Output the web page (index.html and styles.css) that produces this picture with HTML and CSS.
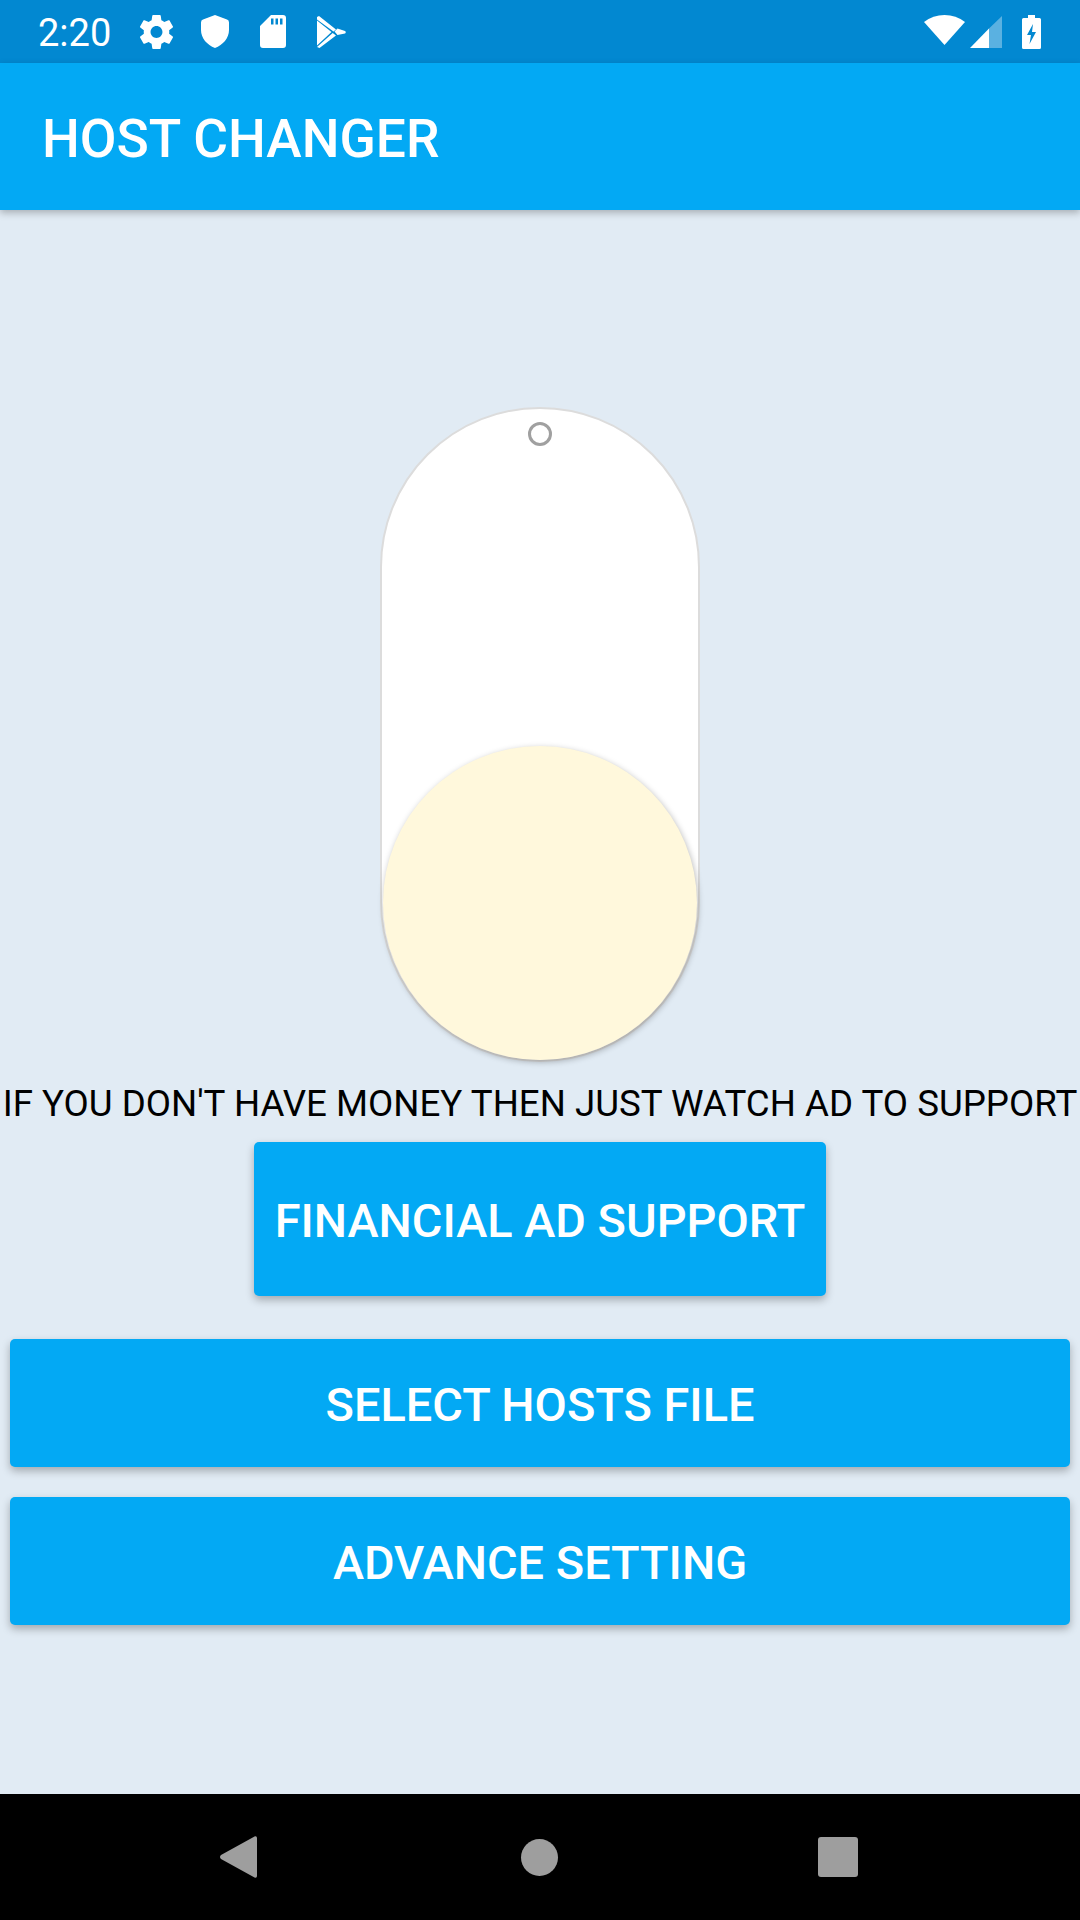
FILE: index.html
```html
<!DOCTYPE html>
<html lang="en">
<head>
  <meta charset="UTF-8">
  <meta name="viewport" content="width=device-width, initial-scale=1.0">
  <title>Host Changer</title>
  <link rel="stylesheet" href="styles.css">
</head>
<body>
  <div class="status-bar">
    <span class="clock">2:20</span>
    <svg class="icon-gear" viewBox="2.4 2 19.2 20"><path fill="#fff" d="M19.43 12.98c.04-.32.07-.64.07-.98s-.03-.66-.07-.98l2.11-1.65c.19-.15.24-.42.12-.64l-2-3.46c-.12-.22-.39-.3-.61-.22l-2.49 1c-.52-.4-1.08-.73-1.69-.98l-.38-2.65C14.46 2.18 14.25 2 14 2h-4c-.25 0-.46.18-.49.42l-.38 2.65c-.61.25-1.17.59-1.69.98l-2.49-1c-.23-.09-.49 0-.61.22l-2 3.46c-.13.22-.07.49.12.64l2.11 1.65c-.04.32-.07.65-.07.98s.03.66.07.98l-2.11 1.65c-.19.15-.24.42-.12.64l2 3.46c.12.22.39.3.61.22l2.49-1c.52.4 1.08.73 1.69.98l.38 2.65c.03.24.24.42.49.42h4c.25 0 .46-.18.49-.42l.38-2.65c.61-.25 1.17-.59 1.69-.98l2.49 1c.23.09.49 0 .61-.22l2-3.46c.12-.22.07-.49-.12-.64l-2.11-1.65zM12 15.5c-1.93 0-3.5-1.57-3.5-3.5s1.57-3.5 3.5-3.5 3.5 1.57 3.5 3.5-1.57 3.5-3.5 3.5z"/></svg>
    <svg class="icon-shield" viewBox="0 0 28 33"><path fill="#fff" d="M14 0 L26 4.5 Q28 5.2 28 7.5 V15 C28 23 22 30 14 33 C6 30 0 23 0 15 V7.5 Q0 5.2 2 4.5 Z"/></svg>
    <svg class="icon-sd" viewBox="0 0 26 33"><path fill="#fff" fill-rule="evenodd" d="M11 0 H23 Q26 0 26 3 V30 Q26 33 23 33 H3 Q0 33 0 30 V11 Z M11 3.5 V9.5 H13.5 V3.5 Z M15.5 3.5 V9.5 H18 V3.5 Z M20 3.5 V9.5 H22.5 V3.5 Z"/></svg>
    <svg class="icon-play" viewBox="0 0 29 32"><path fill="#fff" d="M0 1 L2 0 L19 13.5 L16.5 15.5 L0 3.5 Z M0 4.6 L14.5 16 L0 29.5 Z M0 31 L15.7 17 L19 19.5 L2.5 32 Z M20.5 12.5 L28 15 Q29.5 16 28 17.5 L20.5 19 L17.5 15.5 Z"/></svg>
    <span class="status-spacer"></span>
    <svg class="icon-wifi" viewBox="0 0 41 30"><path fill="#fff" d="M20.5 30 L0 7 Q9 0 20.5 0 Q32 0 41 7 Z"/></svg>
    <svg class="icon-signal" viewBox="0 0 32 32"><path fill="#fff" fill-opacity=".35" d="M32 0 V32 H19 V12.5 Z"/><path fill="#fff" d="M19 12.5 V32 H0 Z"/></svg>
    <svg class="icon-battery" viewBox="0 0 19 34"><path fill="#fff" fill-rule="evenodd" d="M6 0 H13 V3 H17.5 Q19 3 19 4.5 V32.5 Q19 34 17.5 34 H1.5 Q0 34 0 32.5 V4.5 Q0 3 1.5 3 H6 Z M11 9 L5 20 H9 L7.5 29 L14 17 H10 Z"/></svg>
  </div>

  <div class="app-bar">HOST CHANGER</div>

  <div class="content">
    <div class="toggle">
      <div class="toggle-ring"></div>
      <div class="toggle-thumb"></div>
    </div>
    <p class="support-text">IF YOU DON'T HAVE MONEY THEN JUST WATCH AD TO SUPPORT</p>
    <button class="btn btn-ad">FINANCIAL AD SUPPORT</button>
    <button class="btn btn-wide btn-hosts">SELECT HOSTS FILE</button>
    <button class="btn btn-wide btn-advance">ADVANCE SETTING</button>
  </div>

  <div class="nav-bar">
    <svg class="nav-back" viewBox="0 0 37 42"><path fill="#9e9e9e" d="M35 0.3 Q37 0 37 2 V40 Q37 42 35 41.7 L1 23 Q-1 21 1 19 Z"/></svg>
    <div class="nav-home"></div>
    <div class="nav-recent"></div>
  </div>
</body>
</html>
```

FILE: styles.css
```css
* {
  box-sizing: border-box;
}
body {
  margin: 0;
  width: 1080px;
  height: 1920px;
  display: flex;
  flex-direction: column;
  background-color: #e1ebf4;
  font-family: Roboto, sans-serif;
}

.status-bar {
  height: 63px;
  flex-shrink: 0;
  display: flex;
  align-items: center;
  padding: 0 39px 0 38px;
  background-color: #0288d1;
  color: #fff;
}
.clock {
  width: 72px;
  font-size: 38px;
  line-height: 63px;
  margin-right: 30px;
  padding-top: 4px;
}
.status-bar svg {
  display: block;
}
.icon-gear { width: 33px; height: 34px; }
.icon-shield { width: 28px; height: 33px; margin-left: 28px; }
.icon-sd { width: 26px; height: 33px; margin-left: 31px; }
.icon-play { width: 29px; height: 32px; margin-left: 31px; }
.status-spacer { flex: 1; }
.icon-wifi { width: 41px; height: 30px; margin-top: -3px; }
.icon-signal { width: 32px; height: 32px; margin-left: 5px; }
.icon-battery { width: 19px; height: 34px; margin-left: 20px; }

.app-bar {
  height: 147px;
  flex-shrink: 0;
  display: flex;
  align-items: center;
  padding: 4px 0 0 42px;
  background-color: #03a9f4;
  color: #fff;
  font-size: 53.3px;
  font-weight: 500;
  box-shadow: 0 3px 7px rgba(0, 0, 0, 0.25);
  position: relative;
}

.content {
  flex: 1;
  display: flex;
  flex-direction: column;
  align-items: center;
  padding: 197px 10px 0;
}

.toggle {
  position: relative;
  width: 320px;
  height: 655px;
  flex-shrink: 0;
  background-color: #fff;
  border: 2px solid #dcdcdc;
  border-radius: 160px;
}
.toggle-ring {
  position: absolute;
  top: 13px;
  left: 146px;
  width: 24px;
  height: 24px;
  border: 3.5px solid #a0a0a0;
  border-radius: 50%;
}
.toggle-thumb {
  position: absolute;
  left: 1px;
  bottom: 0;
  width: 314px;
  height: 314px;
  background-color: #fff8dc;
  border-radius: 50%;
  box-shadow: 1px 2px 6px rgba(0, 0, 0, 0.28);
}

.support-text {
  margin: 0;
  height: 80px;
  padding-top: 2px;
  line-height: 80px;
  font-size: 36.7px;
  color: #000;
  white-space: nowrap;
}

.btn {
  display: block;
  border: none;
  border-radius: 5px;
  padding: 3px 0 0;
  background-color: #03a9f4;
  color: #fff;
  font-family: Roboto, sans-serif;
  font-size: 46.9px;
  font-weight: 500;
  box-shadow: 0 4px 8px rgba(0, 0, 0, 0.28);
}
.btn-ad {
  width: 572px;
  height: 154px;
}
.btn-wide {
  width: 100%;
  height: 128px;
}
.btn-hosts {
  margin-top: 43px;
}
.btn-advance {
  margin-top: 30px;
}

.nav-bar {
  height: 126px;
  flex-shrink: 0;
  display: flex;
  align-items: center;
  justify-content: space-between;
  padding: 0 222px 0 220px;
  background-color: #000;
}
.nav-back {
  width: 37px;
  height: 42px;
  display: block;
}
.nav-home {
  width: 37px;
  height: 37px;
  margin-left: 4px;
  border-radius: 50%;
  background-color: #9e9e9e;
}
.nav-recent {
  width: 40px;
  height: 40px;
  border-radius: 3px;
  background-color: #9e9e9e;
}
```
